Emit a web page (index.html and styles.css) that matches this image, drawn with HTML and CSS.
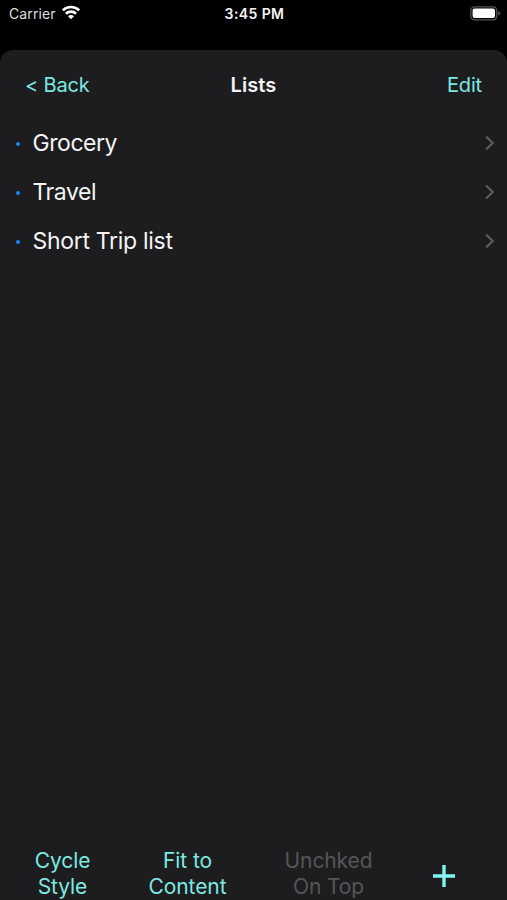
FILE: index.html
```html
<!DOCTYPE html>
<html lang="en">
<head>
  <meta charset="UTF-8">
  <title>Lists</title>
  <link rel="stylesheet" href="styles.css">
</head>
<body>

<div class="status-bar">
  <div class="carrier">
    <span>Carrier</span>
    <svg class="wifi" width="20" height="15" viewBox="0 0 20 15">
      <path d="M1.8 5.4 A11.7 11.7 0 0 1 18.2 5.4" />
      <path d="M4.9 8.7 A7.3 7.3 0 0 1 15.1 8.7" />
      <path class="wifi-dot" d="M7 11.2 Q10 8.7 13 11.2 L10 14.3 Z" />
    </svg>
  </div>
  <div class="time">3:45 PM</div>
  <div class="status-right">
    <svg width="31" height="15" viewBox="0 0 31 15">
      <rect x="0.8" y="0.8" width="26" height="13" rx="3.7" fill="none" stroke="#555" stroke-width="1.3" />
      <rect x="2.6" y="2.6" width="22.4" height="9.4" rx="2" fill="#fff" />
      <path d="M28.2 5 Q30.3 5.7 30.3 7.3 Q30.3 8.9 28.2 9.6 Z" fill="#555" />
    </svg>
  </div>
</div>

<div class="sheet">
  <div class="nav">
    <a class="back">&lt; Back</a>
    <h1>Lists</h1>
    <a class="edit">Edit</a>
  </div>

  <ul class="lists">
    <li>
      <span class="dot"></span>
      <span class="name">Grocery</span>
      <svg class="chevron" width="11" height="16" viewBox="0 0 11 16"><path d="M2 1.5 L8.7 8 L2 14.5" /></svg>
    </li>
    <li>
      <span class="dot"></span>
      <span class="name">Travel</span>
      <svg class="chevron" width="11" height="16" viewBox="0 0 11 16"><path d="M2 1.5 L8.7 8 L2 14.5" /></svg>
    </li>
    <li>
      <span class="dot"></span>
      <span class="name trip">Short Trip list</span>
      <svg class="chevron" width="11" height="16" viewBox="0 0 11 16"><path d="M2 1.5 L8.7 8 L2 14.5" /></svg>
    </li>
  </ul>

  <div class="toolbar">
    <div class="tool">Cycle<br>Style</div>
    <div class="tool">Fit to<br>Content</div>
    <div class="tool disabled">Unchked<br>On Top</div>
    <div class="tool add">
      <svg width="24" height="24" viewBox="0 0 24 24"><path d="M12 1 V23 M1 12 H23" /></svg>
    </div>
  </div>
</div>

</body>
</html>
```
FILE: styles.css
```css
* {
  box-sizing: border-box;
}

body {
  margin: 0;
  height: 900px;
  background: #000;
  color: #f4f4f4;
  font-family: Inter, "Liberation Sans", sans-serif;
  display: flex;
  flex-direction: column;
  overflow: hidden;
}

/* status bar */
.status-bar {
  height: 50px;
  padding: 0 6px 0 9px;
  display: grid;
  grid-template-columns: 1fr auto 1fr;
  align-items: start;
  font-size: 14px;
  line-height: 28px;
}
.carrier {
  display: flex;
  gap: 5px;
  color: #ddd;
  letter-spacing: 0.1px;
}
.wifi {
  margin-top: 5px;
  fill: none;
  stroke: #fff;
  stroke-width: 2.6;
}
.wifi .wifi-dot {
  fill: #fff;
  stroke: none;
}
.time {
  font-weight: 600;
  letter-spacing: 0.4px;
  margin-right: 1px;
}
.status-right {
  display: flex;
  justify-content: flex-end;
  padding-top: 6px;
}

/* sheet */
.sheet {
  flex: 1;
  background: #1d1d1f;
  border-radius: 13px 13px 0 0;
  display: flex;
  flex-direction: column;
}
.nav {
  height: 68px;
  padding: 2px 25px 0;
  display: grid;
  grid-template-columns: 1fr auto 1fr;
  align-items: center;
  font-size: 20px;
}
.nav a {
  color: #7ce9e1;
  letter-spacing: -0.15px;
}
.nav h1 {
  margin: 0;
  font-size: 20px;
  font-weight: 600;
  letter-spacing: 0.1px;
}
.edit {
  text-align: right;
}

.lists {
  list-style: none;
  margin: 0;
  padding: 0;
  flex: 1;
}
.lists li {
  height: 49px;
  padding: 0 12px 0 16px;
  display: flex;
  align-items: center;
}
.dot {
  width: 4px;
  height: 4px;
  margin: 3px 12.5px 0 0;
  border-radius: 50%;
  background: #1688f5;
}
.name {
  flex: 1;
  font-size: 23px;
  letter-spacing: -0.45px;
}
.trip {
  letter-spacing: -0.3px;
}
.chevron {
  fill: none;
  stroke: #5b5b5e;
  stroke-width: 2.2;
}

/* bottom toolbar */
.toolbar {
  height: 52px;
  display: grid;
  grid-template-columns: 125px 125px 157px 73px;
  text-align: center;
  font-size: 21px;
  line-height: 26px;
  letter-spacing: -0.1px;
  color: #7ce9e1;
}
.disabled {
  color: #555557;
}
.add {
  padding-top: 16px;
}
.add svg {
  display: block;
  margin: 0 auto;
  stroke: #80f5ef;
  stroke-width: 3.4;
}
```
